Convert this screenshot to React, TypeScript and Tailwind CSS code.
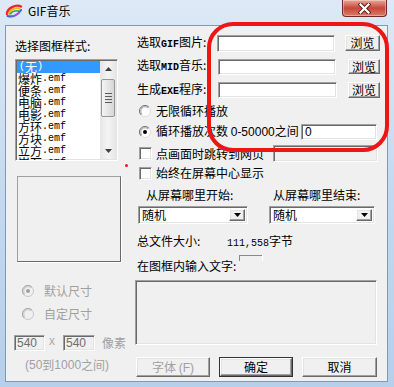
import React from "react";

const sunken =
  "border border-t-[#a0a0a0] border-l-[#a0a0a0] border-r-white border-b-white shadow-[inset_1px_1px_0_#696969,inset_-1px_-1px_0_#e3e3e3]";
const raised =
  "border border-t-white border-l-white border-r-[#696969] border-b-[#696969] shadow-[inset_-1px_-1px_0_#a0a0a0,inset_1px_1px_0_#e3e3e3] bg-[#f0f0f0]";
const mono = "font-['Liberation_Mono',monospace] text-[10px]";
const sans = "font-['Liberation_Sans',sans-serif] text-[12px]";

function Radio({ checked, disabled }: { checked?: boolean; disabled?: boolean }) {
  return (
    <svg width="12" height="12" viewBox="0 0 12 12" className="shrink-0">
      <circle cx="6" cy="6" r="5.5" fill={disabled ? "#f0f0f0" : "#fff"} stroke={disabled ? "#c8c8c8" : "#dcdcdc"} />
      <path d="M2.1 9.9 A5.5 5.5 0 0 1 9.9 2.1" stroke={disabled ? "#a8a8a8" : "#707070"} fill="none" />
      <path d="M3 9 A4.2 4.2 0 0 1 9 3" stroke={disabled ? "#c8c8c8" : "#a0a0a0"} fill="none" />
      {checked && <circle cx="6" cy="6" r="2" fill={disabled ? "#a0a0a0" : "#000"} />}
    </svg>
  );
}

function Check() {
  return <div className={`${sunken} w-[13px] h-[13px] bg-white shrink-0`} />;
}

function Btn({ label, w, h, cls = "" }: { label: React.ReactNode; w: string; h: string; cls?: string }) {
  return (
    <div className={`${raised} ${w} ${h} ${cls} flex items-center justify-center shrink-0`}>{label}</div>
  );
}

function Combo({ w }: { w: string }) {
  return (
    <div className={`${sunken} ${w} h-[18px] bg-white flex items-stretch p-[2px]`}>
      <div className="flex-1 pl-[1px] flex items-center">随机</div>
      <div className={`${raised} w-[16px] flex items-center justify-center`}>
        <svg width="7" height="4" viewBox="0 0 7 4">
          <path d="M0 0 H7 L3.5 4 Z" fill="#000" />
        </svg>
      </div>
    </div>
  );
}

function Scrollbar() {
  return (
    <div className="w-[16px] my-[1px] mr-[1px] flex flex-col bg-gradient-to-r from-[#e6e6e6] via-[#f4f4f4] to-[#e6e6e6]">
      <div className="h-[16px] flex items-center justify-center">
        <svg width="7" height="4" viewBox="0 0 7 4">
          <path d="M0 4 H7 L3.5 0 Z" fill="#404040" />
        </svg>
      </div>
      <div className="mt-[2px] mx-[1px] h-[38px] rounded-[2px] border border-[#979797] bg-gradient-to-r from-[#f4f4f4] to-[#d6d6d6] flex flex-col items-center justify-center gap-[2px]">
        <div className="w-[7px] h-[1px] bg-[#5c5c5c]" />
        <div className="w-[7px] h-[1px] bg-[#5c5c5c]" />
        <div className="w-[7px] h-[1px] bg-[#5c5c5c]" />
        <div className="w-[7px] h-[1px] bg-[#5c5c5c]" />
      </div>
      <div className="mt-auto h-[16px] flex items-center justify-center">
        <svg width="7" height="4" viewBox="0 0 7 4">
          <path d="M0 0 H7 L3.5 4 Z" fill="#404040" />
        </svg>
      </div>
    </div>
  );
}

const items = ["爆炸", "便条", "电脑", "电影", "方环", "方块", "立方", "岩石"];

export default function App() {
  return (
    <div className="relative w-[394px] h-[387px] overflow-hidden bg-gradient-to-b from-[#dde9f6] via-[#c4d9ef] to-[#b6cfea] font-['SimSun','Noto_Sans_CJK_SC',sans-serif] text-[12px] leading-[12px] text-black">
      {/* title bar */}
      <div className="flex h-[25px]">
        <div className="flex items-center h-[22px] pl-[5px] gap-[5px]">
          <svg width="18" height="14" viewBox="0 0 18 14">
            <path d="M2 10 C2 4, 11 0, 16 2.5" stroke="#e8262b" strokeWidth="2.4" fill="none" strokeLinecap="round" />
            <path d="M3.5 9.5 C5 5.5, 11 3.5, 14.5 4.5" stroke="#f5b41a" strokeWidth="1.8" fill="none" strokeLinecap="round" />
            <path d="M5 10 C7 7.5, 11 6.5, 13.5 7" stroke="#34a844" strokeWidth="1.6" fill="none" strokeLinecap="round" />
            <path d="M2.5 12 C7 13.5, 13 11.5, 16 6" stroke="#2a6fd8" strokeWidth="2" fill="none" strokeLinecap="round" />
            <path d="M6 12 C10 12, 13 10, 14 8" stroke="#d43fc0" strokeWidth="1.4" fill="none" strokeLinecap="round" />
          </svg>
          <span className="font-['Noto_Sans_CJK_SC',sans-serif] text-[12px] leading-[14px]">GIF音乐</span>
        </div>
        <div className="ml-auto mr-[7px] w-[45px] h-[17px] rounded-b-[4px] border border-t-0 border-[#6e2b25] bg-gradient-to-b from-[#e7a797] via-[#c7463a] to-[#d87a66] shadow-[inset_0_0_0_1px_rgba(255,255,255,0.35)] flex items-center justify-center">
          <svg width="13" height="11" viewBox="0 0 13 11">
            <path d="M2.5 1.5 L10.5 9.5 M10.5 1.5 L2.5 9.5" stroke="#4a1d1a" strokeWidth="4" strokeLinecap="square" />
            <path d="M2.5 1.5 L10.5 9.5 M10.5 1.5 L2.5 9.5" stroke="#fff" strokeWidth="2.2" strokeLinecap="square" />
          </svg>
        </div>
      </div>

      {/* client area */}
      <div className="ml-[5px] w-[383px] h-[357px] border border-[#8498b1] bg-[#f0f0f0] flex">
        {/* left column */}
        <div className="ml-[8px] w-[113px] flex flex-col">
          <div className="mt-[14px] ml-[1px] h-[12px]">选择图框样式:</div>
          <div className={`${sunken} mt-[7px] ml-[1px] w-[103px] h-[102px] bg-white flex overflow-hidden`}>
            <div className="flex-1 pt-[1px] pl-[1px] overflow-hidden">
              <div className="h-[12px] bg-[#3399ff] text-white pl-[2px] flex items-center">
                <span className={mono}>(</span>无<span className={mono}>)</span>
              </div>
              {items.map((x) => (
                <div key={x} className="h-[12px] pl-[1px] flex items-center whitespace-nowrap">
                  {x}
                  <span className={mono}>.emf</span>
                </div>
              ))}
            </div>
            <Scrollbar />
          </div>
          <div className="mt-[15px] ml-[3px] w-[104px] h-[86px] border border-t-[#a0a0a0] border-l-[#a0a0a0] border-r-[#696969] border-b-[#696969] shadow-[1px_1px_0_#fff]" />
          <div className="mt-[22px] h-[14px] flex items-center ml-[8px] text-[#a0a0a0]">
            <Radio checked disabled />
            <span className="ml-[10px]">默认尺寸</span>
          </div>
          <div className="mt-[9px] h-[14px] flex items-center ml-[8px] text-[#a0a0a0]">
            <Radio disabled />
            <span className="ml-[10px]">自定尺寸</span>
          </div>
          <div className="mt-[14px] h-[16px] flex items-center">
            <div className={`${sunken} w-[31px] h-[16px] pl-[2px] flex items-center ${sans} text-[#6d6d6d]`}>540</div>
            <span className={`${mono} ml-[4px] text-[#a0a0a0]`}>X</span>
            <div className={`${sunken} ml-[8px] w-[32px] h-[16px] pl-[2px] flex items-center ${sans} text-[#6d6d6d]`}>540</div>
            <span className="ml-[7px] text-[#a0a0a0]">像素</span>
          </div>
          <div className="mt-[8px] ml-[11px] h-[12px] text-[#a0a0a0] whitespace-nowrap flex items-center">
            <span className={sans}>(50</span>到<span className={sans}>1000</span>之间<span className={sans}>)</span>
          </div>
        </div>

        {/* right column */}
        <div className="ml-[8px] w-[246px] flex flex-col">
          <div className="mt-[8px] h-[18px] flex items-center">
            <div className="ml-[2px] w-[80px] whitespace-nowrap">
              选取<span className={`${mono} font-bold`}>GIF</span>图片:
            </div>
            <div className={`${sunken} w-[118px] h-[17px] bg-white`} />
            <Btn label="浏览" w="w-[35px]" h="h-[16px]" cls="ml-[10px]" />
          </div>
          <div className="mt-[6px] h-[17px] flex items-center">
            <div className="ml-[2px] w-[81px] whitespace-nowrap">
              选取<span className={`${mono} font-bold`}>MID</span>音乐:
            </div>
            <div className={`${sunken} w-[118px] h-[16px] bg-white`} />
            <Btn label="浏览" w="w-[32px]" h="h-[15px]" cls="ml-[12px]" />
          </div>
          <div className="mt-[7px] h-[16px] flex items-center">
            <div className="ml-[2px] w-[81px] whitespace-nowrap">
              生成<span className={`${mono} font-bold`}>EXE</span>程序:
            </div>
            <div className={`${sunken} w-[119px] h-[16px] bg-white`} />
            <Btn label="浏览" w="w-[32px]" h="h-[16px]" cls="ml-[11px]" />
          </div>
          <div className="mt-[6px] h-[14px] flex items-center">
            <div className="ml-[4px]"><Radio /></div>
            <span className="ml-[5px]">无限循环播放</span>
          </div>
          <div className="mt-[5px] h-[17px] flex items-center">
            <div className="ml-[4px]"><Radio checked /></div>
            <span className="ml-[5px] whitespace-nowrap">
              循环播放次数 <span className={sans}>0-50000</span>之间
            </span>
            <div className={`${sunken} ml-auto mr-[4px] w-[76px] h-[16px] bg-white pl-[3px] flex items-center ${sans}`}>0</div>
          </div>
          <div className="mt-[5px] h-[17px] flex items-center">
            <div className="ml-[4px]"><Check /></div>
            <span className="ml-[4px] whitespace-nowrap">点画面时跳转到网页</span>
            <div className={`${sunken} ml-auto mr-[3px] w-[105px] h-[17px] bg-[#f0f0f0]`} />
          </div>
          <div className="mt-[4px] h-[14px] flex items-center">
            <div className="ml-[4px]"><Check /></div>
            <span className="ml-[4px]">始终在屏幕中心显示</span>
          </div>
          <div className="mt-[9px] h-[12px] flex whitespace-nowrap">
            <span className="ml-[11px] w-[127px]">从屏幕哪里开始:</span>
            <span>从屏幕哪里结束:</span>
          </div>
          <div className="mt-[5px] h-[18px] flex">
            <div className="ml-[3px]"><Combo w="w-[110px]" /></div>
            <div className="ml-[21px]"><Combo w="w-[106px]" /></div>
          </div>
          <div className="mt-[11px] h-[12px] flex whitespace-nowrap">
            <span className="ml-[2px] w-[90px]">总文件大小:</span>
            <span>
              <span className={mono}>111,558</span>字节
            </span>
          </div>
          <div className="mt-[13px] h-[12px] flex whitespace-nowrap">
            <span className="ml-[2px]">在图框内输入文字:</span>
            <div className="ml-[3px] mt-[-5px] w-[23px] h-[6px] border-t border-l border-[#8a8a8a] shadow-[1px_0_0_#fff]" />
          </div>
          <div className={`${sunken} mt-[8px] h-[65px] w-[242px] bg-[#f0f0f0]`} />
          <div className="mt-[12px] h-[20px] flex">
            <Btn
              label={
                <span className="text-[#a0a0a0] whitespace-nowrap">
                  字体 <span className={`${sans} text-[11px]`}>(F)</span>
                </span>
              }
              w="w-[74px]"
              h="h-[20px]"
              cls="ml-[1px]"
            />
            <div className="ml-[9px] w-[74px] h-[20px] border border-[#333]">
              <Btn label="确定" w="w-full" h="h-full" />
            </div>
            <Btn label="取消" w="w-[75px]" h="h-[20px]" cls="ml-[9px]" />
          </div>
        </div>
      </div>

      {/* annotation ring and stray dot drawn over the dialog */}
      <div className="absolute left-[207px] top-[22px] w-[182px] h-[130px] border-[4px] border-[#f01515] rounded-[26px] pointer-events-none" />
      <div className="absolute left-[125px] top-[164px] w-[3px] h-[3px] rounded-full bg-[#ff1010]" />
    </div>
  );
}
